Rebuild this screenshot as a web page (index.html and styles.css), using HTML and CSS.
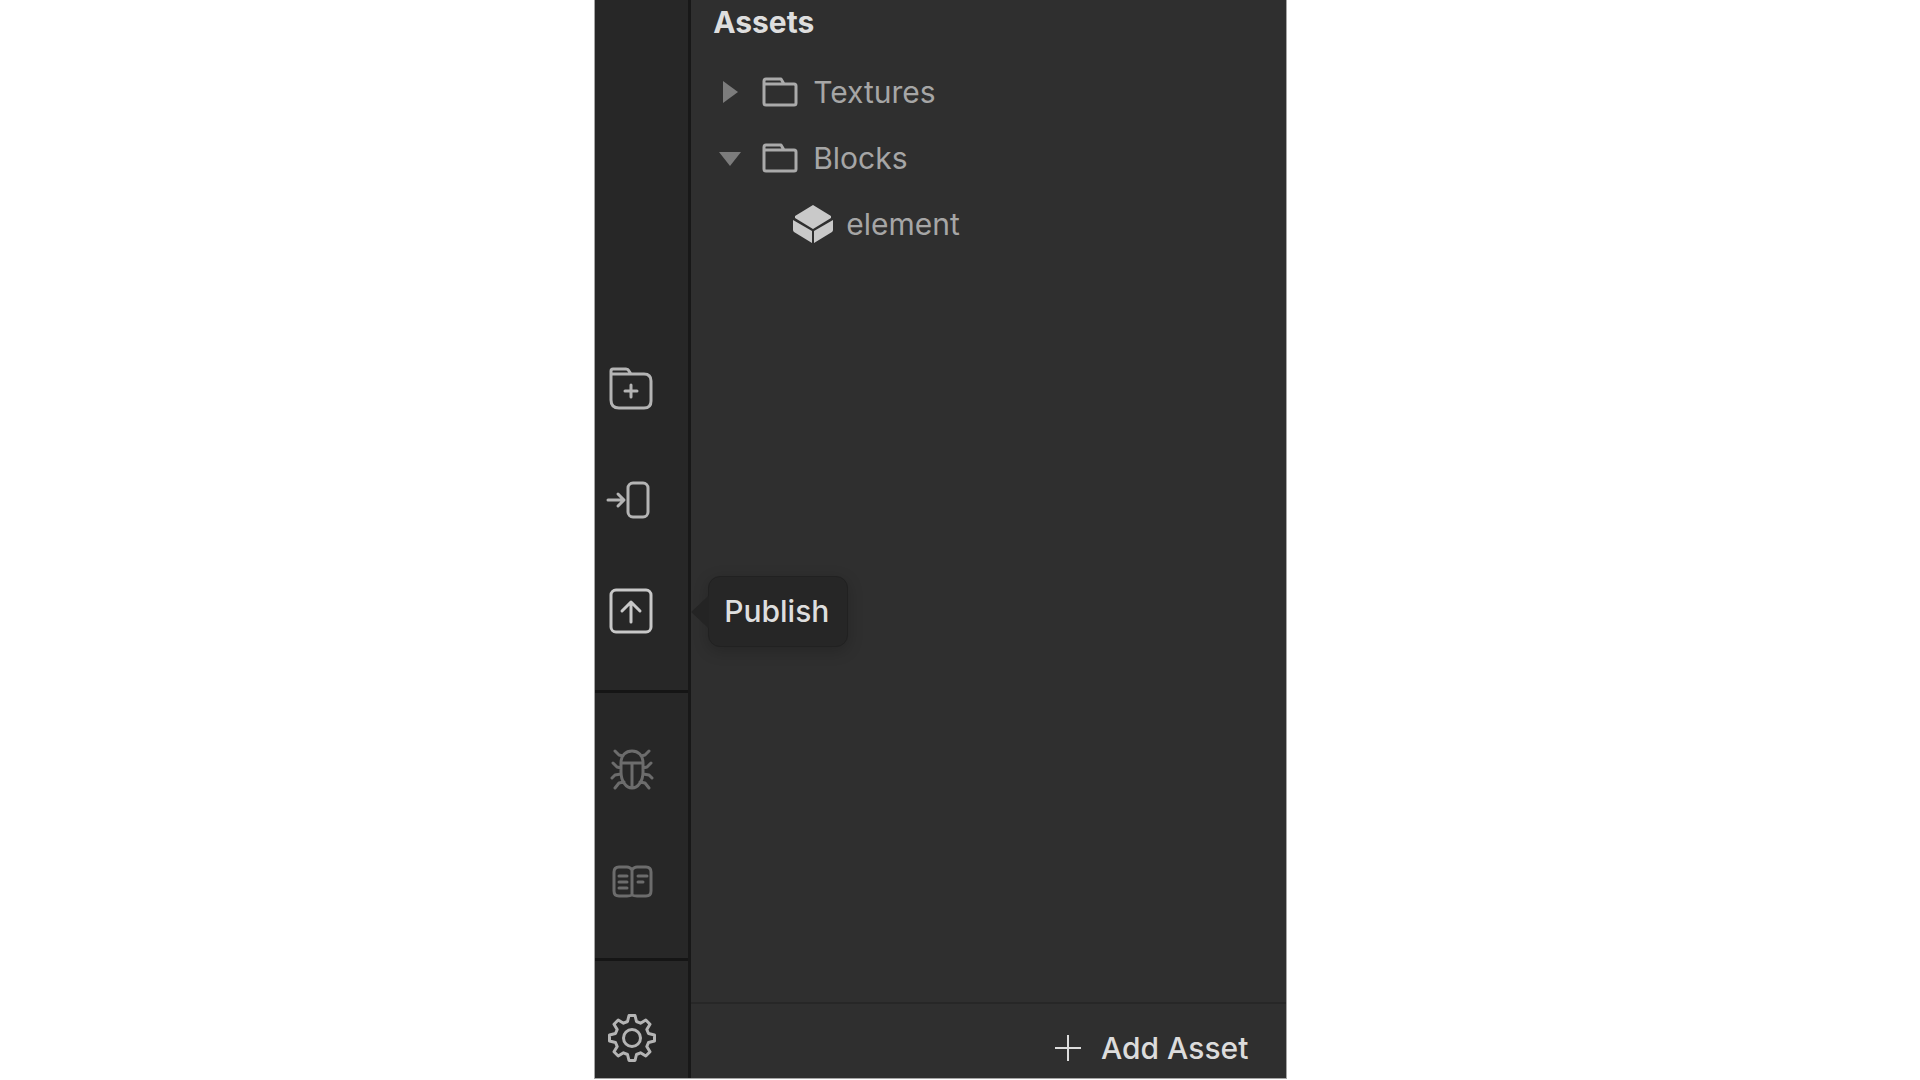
FILE: index.html
```html
<!DOCTYPE html>
<html lang="en">
<head>
<meta charset="utf-8">
<title>Assets</title>
<link rel="stylesheet" href="styles.css">
</head>
<body>
<div class="app">
  <nav class="sidebar" aria-label="Project tools">
    <div class="tool-group tool-group-main">
      <button class="tool" type="button" aria-label="New project">
        <svg viewBox="0 0 48 48"><path d="M4 12V6q0-2 2-2h13q2 0 3 2l2 3h13q7 0 7 7v20q0 7-7 7H12q-8 0-8-8V9h20M24 20v12M18 26h12"/></svg>
      </button>
      <button class="tool" type="button" aria-label="Send to device">
        <svg viewBox="0 0 48 48"><rect x="21" y="7" width="20" height="34" rx="5"/><path d="M1 24h15M11 18l6 6-6 6"/></svg>
      </button>
      <button class="tool tool-active" type="button" aria-label="Publish" aria-describedby="publish-tip">
        <svg viewBox="0 0 48 48"><rect x="4" y="3" width="40" height="42" rx="5"/><path d="M24 35V15M15 24l9-9 9 9"/></svg>
        <span class="tooltip" id="publish-tip" role="tooltip">Publish</span>
      </button>
    </div>
    <div class="tool-group">
      <button class="tool tool-muted" type="button" aria-label="Debug">
        <svg viewBox="0 0 48 48"><path d="M14 17c0-8 5-12 11-12s11 4 11 12zM14 17v9c0 9 5 16 11 16s11-7 11-16v-9M25 17v25M16 10l-4-1-4-4M34 10l4-1 4-4M14 22l-4-1-4-4M36 22l4-1 4-4M14 28l-6 1-3 3M36 28l6 1 3 3M17 36l-5 1-4 5M33 36l5 1 4 5"/></svg>
      </button>
      <button class="tool tool-muted" type="button" aria-label="Documentation">
        <svg viewBox="0 0 48 48"><path d="M25 13q-2-3-5-3h-8q-5 0-5 5v19q0 5 5 5h8q3 0 5-1 2 1 5 1h9q5 0 5-5V15q0-5-5-5h-9q-3 0-5 3v25M12 19h8M12 25h8M12 31h8M31 19h9M31 25h5"/></svg>
      </button>
    </div>
    <div class="tool-group tool-group-last">
      <button class="tool" type="button" aria-label="Settings">
        <svg viewBox="-25 -24 48 48"><path d="M-4.5-16.5L-3-22.5H3L4.5-16.5 8.5-14.8 13.8-18 18-13.8 14.8-8.5 16.5-4.5 22.5-3V3L16.5 4.5 14.8 8.5 18 13.8 13.8 18 8.5 14.8 4.5 16.5 3 22.5H-3L-4.5 16.5-8.5 14.8-13.8 18-18 13.8-14.8 8.5-16.5 4.5-22.5 3V-3L-16.5-4.5-14.8-8.5-18-13.8-13.8-18-8.5-14.8z"/><circle r="8.5"/></svg>
      </button>
    </div>
  </nav>
  <main class="panel">
    <h1 class="panel-title">Assets</h1>
    <ul class="tree">
      <li>
        <button class="row" type="button" aria-expanded="false">
          <svg class="arrow" viewBox="0 0 24 24"><path d="M5 1v22l15-11z"/></svg>
          <svg class="folder" viewBox="0 0 36 30"><path d="M2 8V4q0-2 2-2h15l3 5h10q2 0 2 2v17q0 2-2 2H4q-2 0-2-2V7h20"/></svg>
          <span>Textures</span>
        </button>
      </li>
      <li>
        <button class="row" type="button" aria-expanded="true">
          <svg class="arrow" viewBox="0 0 24 24"><path d="M1 6h22L12 20z"/></svg>
          <svg class="folder" viewBox="0 0 36 30"><path d="M2 8V4q0-2 2-2h15l3 5h10q2 0 2 2v17q0 2-2 2H4q-2 0-2-2V7h20"/></svg>
          <span>Blocks</span>
        </button>
        <ul class="tree-children">
          <li>
            <button class="row row-child" type="button">
              <svg class="cube" viewBox="0 0 40 38"><path d="M20 0l18 11v2L20 24 2 13v-2zM0 15l19 11v12L1 27q-1-1-1-2zM40 15L21 26v12l18-11q1-1 1-2z"/></svg>
              <span>element</span>
            </button>
          </li>
        </ul>
      </li>
    </ul>
    <footer class="panel-footer">
      <button class="add-asset" type="button">
        <svg class="plus" viewBox="0 0 26 26"><path d="M13 0v26M0 13h26"/></svg>
        <span>Add Asset</span>
      </button>
    </footer>
  </main>
</div>
</body>
</html>
```
FILE: styles.css
```css
* {
  box-sizing: border-box;
}

body {
  margin: 0;
  background: #fff;
  font-family: Inter, "Liberation Sans", sans-serif;
  font-size: 30px;
  line-height: 44px;
}

button {
  border: 0;
  padding: 0;
  background: none;
  color: inherit;
  font: inherit;
}

ul {
  margin: 0;
  padding: 0;
  list-style: none;
}

.app {
  display: flex;
  width: calc(36vw + 2px);
  min-width: 480px;
  min-height: calc(100vh - 1px);
  margin-left: calc(31vw - 1px);
  border: 1px solid #a5a5a5;
  border-top: 0;
  background: #2f2f2f;
}

.sidebar {
  display: flex;
  flex: none;
  flex-direction: column;
  justify-content: flex-end;
  width: 96px;
  border-right: 3px solid #181818;
  background: #272727;
}

.tool-group {
  display: flex;
  flex-direction: column;
  gap: 63px;
  padding: 53px 12px;
  border-bottom: 3px solid #151515;
}

.tool-group-main {
  padding-bottom: 55px;
}

.tool-group-last {
  padding-bottom: 16px;
  border-bottom: 0;
}

.tool {
  position: relative;
  width: 48px;
  height: 48px;
  color: #b4b4b4;
}

.tool svg {
  display: block;
  width: 48px;
  height: 48px;
  overflow: visible;
  fill: none;
  stroke: currentColor;
  stroke-width: 3;
  stroke-linecap: round;
  stroke-linejoin: round;
}

.tool-active {
  color: #c8c8c8;
}

.tool-muted {
  color: #6c6c6c;
}

.tooltip {
  position: absolute;
  top: -11px;
  left: 101px;
  padding: 12px 18px 13px 15px;
  border: 1px solid #212121;
  border-radius: 12px;
  background: #262626;
  box-shadow: 0 4px 16px rgba(0, 0, 0, 0.2);
  color: #dedede;
  font-weight: 500;
}

.tooltip::before {
  content: "";
  position: absolute;
  top: 18px;
  left: -18px;
  width: 18px;
  height: 34px;
  background: #242424;
  clip-path: polygon(0 50%, 100% 0, 100% 100%);
}

.panel {
  display: flex;
  flex: 1;
  flex-direction: column;
  min-width: 0;
}

.panel-title {
  margin: 0 0 15px;
  padding-left: 22px;
  color: #dedede;
  font-size: 30px;
  font-weight: 700;
}

.tree {
  flex: 1;
  color: #a6a6a6;
}

.row {
  display: flex;
  align-items: center;
  width: 100%;
  height: 66px;
  padding-left: 27px;
  text-align: left;
}

.row-child {
  gap: 13px;
  padding-left: 102px;
}

.arrow {
  width: 24px;
  height: 24px;
  margin-right: 20px;
  fill: #7c7c7c;
}

.folder {
  width: 36px;
  height: 30px;
  margin-right: 15px;
  fill: none;
  stroke: #aaa;
  stroke-width: 3;
  stroke-linejoin: round;
}

.cube {
  width: 40px;
  height: 38px;
  fill: #c9c9c9;
}

.panel-footer {
  display: flex;
  justify-content: flex-end;
  padding: 22px 38px 8px;
  border-top: 2px solid #272727;
}

.add-asset {
  display: flex;
  align-items: center;
  gap: 20px;
  color: #dcdcdc;
  font-weight: 500;
}

.plus {
  width: 26px;
  height: 26px;
  stroke: currentColor;
  stroke-width: 2;
}
```
